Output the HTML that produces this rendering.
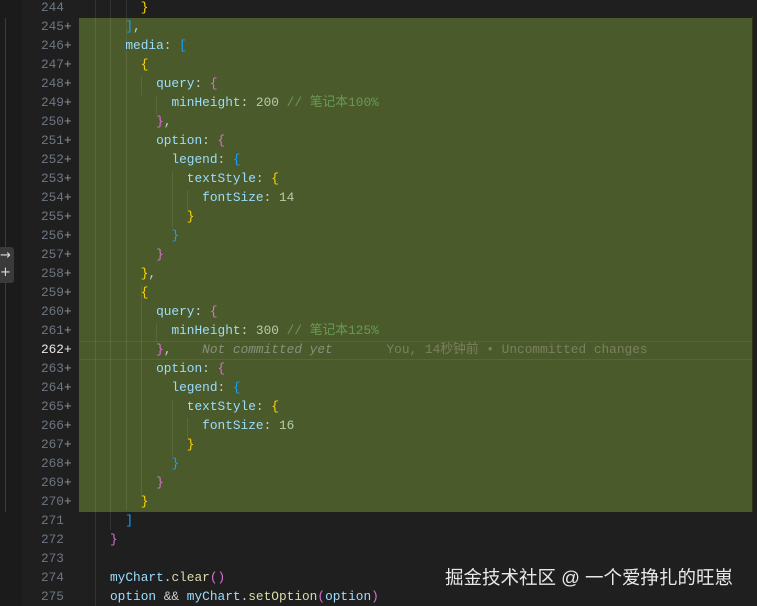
<!DOCTYPE html>
<html><head><meta charset="utf-8"><style>
html,body{margin:0;padding:0;width:757px;height:606px;overflow:hidden;background:#1f1f1f;}
body{position:relative;font-family:"Liberation Mono","Noto Sans CJK SC",monospace;font-size:12.8px;}
.l{position:absolute;left:0;width:757px;height:19px;line-height:19px;white-space:pre;}
.n{position:absolute;left:22px;width:42px;text-align:right;color:#6e7681;}
.p{position:absolute;left:64px;color:#8b949e;}
.c{position:absolute;left:110px;color:#cccccc;}
.k{color:#9cdcfe}.v{color:#b5cea8}.cm{color:#6a9955}.y{color:#ffd700}.m{color:#da70d6}.b{color:#179fff}.f{color:#dcdcaa}
.hl{position:absolute;left:79px;top:18px;width:673px;height:494px;background:#4b5a2b;}
.g{position:absolute;width:1px;background:rgba(255,255,255,0.09);}
</style></head><body>
<div style="position:absolute;left:0;top:0;width:22px;height:606px;background:#1b1b1b"></div>
<div style="position:absolute;left:5px;top:18px;width:1px;height:494px;background:#3c3c3c"></div>
<div style="position:absolute;left:22px;top:0;width:57px;height:606px;background:#1f1f1f"></div>
<div class="hl"></div>
<div style="position:absolute;left:752px;top:16px;width:1px;height:496px;background:#2a3218"></div>
<div style="position:absolute;left:79px;top:341px;width:673px;height:19px;border-top:1px solid rgba(255,255,255,0.07);border-bottom:1px solid rgba(255,255,255,0.07);box-sizing:border-box"></div>
<div class="g" style="left:95px;top:0;height:606px"></div>
<div class="g" style="left:110px;top:0;height:530px"></div>
<div class="g" style="left:126px;top:0;height:510px"></div>
<div class="g" style="left:141px;top:76px;height:19px"></div><div class="g" style="left:141px;top:285px;height:210px"></div>
<div class="g" style="left:156px;top:95px;height:19px"></div><div class="g" style="left:156px;top:323px;height:19px"></div>
<div class="g" style="left:172px;top:171px;height:57px"></div><div class="g" style="left:172px;top:399px;height:57px"></div>
<div class="g" style="left:187px;top:190px;height:19px"></div><div class="g" style="left:187px;top:418px;height:19px"></div>
<div style="position:absolute;left:0;top:247px;width:14px;height:36px;background:#3a3a3a;border-radius:0 3px 3px 0;color:#ddd;font-size:13px;line-height:17px;font-family:'DejaVu Sans',sans-serif">→<br>+</div>

<div class="l" style="top:-2px"><span class="n">244</span><span class="c">    <span class="y">}</span></span></div>
<div class="l" style="top:17px"><span class="n">245</span><span class="p">+</span><span class="c">  <span class="b">]</span>,</span></div>
<div class="l" style="top:36px"><span class="n">246</span><span class="p">+</span><span class="c">  <span class="k">media</span>: <span class="b">[</span></span></div>
<div class="l" style="top:55px"><span class="n">247</span><span class="p">+</span><span class="c">    <span class="y">{</span></span></div>
<div class="l" style="top:74px"><span class="n">248</span><span class="p">+</span><span class="c">      <span class="k">query</span>: <span class="m">{</span></span></div>
<div class="l" style="top:93px"><span class="n">249</span><span class="p">+</span><span class="c">        <span class="k">minHeight</span>: <span class="v">200</span> <span class="cm">// 笔记本100%</span></span></div>
<div class="l" style="top:112px"><span class="n">250</span><span class="p">+</span><span class="c">      <span class="m">}</span>,</span></div>
<div class="l" style="top:131px"><span class="n">251</span><span class="p">+</span><span class="c">      <span class="k">option</span>: <span class="m">{</span></span></div>
<div class="l" style="top:150px"><span class="n">252</span><span class="p">+</span><span class="c">        <span class="k">legend</span>: <span class="b">{</span></span></div>
<div class="l" style="top:169px"><span class="n">253</span><span class="p">+</span><span class="c">          <span class="k">textStyle</span>: <span class="y">{</span></span></div>
<div class="l" style="top:188px"><span class="n">254</span><span class="p">+</span><span class="c">            <span class="k">fontSize</span>: <span class="v">14</span></span></div>
<div class="l" style="top:207px"><span class="n">255</span><span class="p">+</span><span class="c">          <span class="y">}</span></span></div>
<div class="l" style="top:226px"><span class="n">256</span><span class="p">+</span><span class="c">        <span class="b">}</span></span></div>
<div class="l" style="top:245px"><span class="n">257</span><span class="p">+</span><span class="c">      <span class="m">}</span></span></div>
<div class="l" style="top:264px"><span class="n">258</span><span class="p">+</span><span class="c">    <span class="y">}</span>,</span></div>
<div class="l" style="top:283px"><span class="n">259</span><span class="p">+</span><span class="c">    <span class="y">{</span></span></div>
<div class="l" style="top:302px"><span class="n">260</span><span class="p">+</span><span class="c">      <span class="k">query</span>: <span class="m">{</span></span></div>
<div class="l" style="top:321px"><span class="n">261</span><span class="p">+</span><span class="c">        <span class="k">minHeight</span>: <span class="v">300</span> <span class="cm">// 笔记本125%</span></span></div>
<div class="l" style="top:340px"><span class="n" style="color:#e6e6e6">262</span><span class="p" style="color:#e6e6e6">+</span><span class="c">      <span class="m">}</span>,<span style="color:#8a8f7e;font-style:italic">    Not committed yet</span><span style="color:#7a8060">       You, 14秒钟前 • Uncommitted changes</span></span></div>
<div class="l" style="top:359px"><span class="n">263</span><span class="p">+</span><span class="c">      <span class="k">option</span>: <span class="m">{</span></span></div>
<div class="l" style="top:378px"><span class="n">264</span><span class="p">+</span><span class="c">        <span class="k">legend</span>: <span class="b">{</span></span></div>
<div class="l" style="top:397px"><span class="n">265</span><span class="p">+</span><span class="c">          <span class="k">textStyle</span>: <span class="y">{</span></span></div>
<div class="l" style="top:416px"><span class="n">266</span><span class="p">+</span><span class="c">            <span class="k">fontSize</span>: <span class="v">16</span></span></div>
<div class="l" style="top:435px"><span class="n">267</span><span class="p">+</span><span class="c">          <span class="y">}</span></span></div>
<div class="l" style="top:454px"><span class="n">268</span><span class="p">+</span><span class="c">        <span class="b">}</span></span></div>
<div class="l" style="top:473px"><span class="n">269</span><span class="p">+</span><span class="c">      <span class="m">}</span></span></div>
<div class="l" style="top:492px"><span class="n">270</span><span class="p">+</span><span class="c">    <span class="y">}</span></span></div>
<div class="l" style="top:511px"><span class="n">271</span><span class="c">  <span class="b">]</span></span></div>
<div class="l" style="top:530px"><span class="n">272</span><span class="c"><span class="m">}</span></span></div>
<div class="l" style="top:549px"><span class="n">273</span></div>
<div class="l" style="top:568px"><span class="n">274</span><span class="c"><span class="k">myChart</span>.<span class="f">clear</span><span class="m">()</span></span></div>
<div class="l" style="top:587px"><span class="n">275</span><span class="c"><span class="k">option</span> &amp;&amp; <span class="k">myChart</span>.<span class="f">setOption</span><span class="m">(</span><span class="k">option</span><span class="m">)</span></span></div>

<div style="position:absolute;left:445px;top:565px;color:#e8e8e8;font-family:'Liberation Sans','Noto Sans CJK SC',sans-serif;font-size:18.5px;line-height:26px;white-space:nowrap">掘金技术社区 @ 一个爱挣扎的旺崽</div>
</body></html>
